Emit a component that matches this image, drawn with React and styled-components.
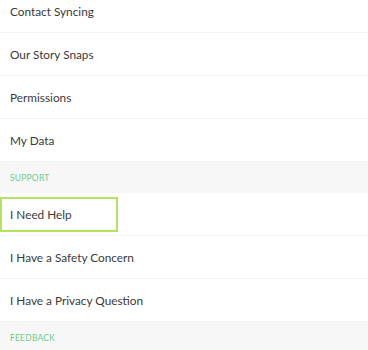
import styled, { createGlobalStyle } from "styled-components"

const GlobalStyle = createGlobalStyle`
    body {
        margin: 0;
        background: #FFFFFF;
        font-family: Lato, "Noto Sans", sans-serif;
        overflow: hidden;
    }
`

const sections = [
    { items: ["Contact Syncing", "Our Story Snaps", "Permissions", "My Data"] },
    { title: "Support", items: ["I Need Help", "I Have a Safety Concern", "I Have a Privacy Question"] },
    { title: "Feedback", items: [] },
]

export default function App(){
    return(
        <>
            <GlobalStyle />
            <List>
                {sections.map((section, i) => (
                    <div key={i}>
                        {section.title && <Header>{section.title}</Header>}
                        {section.items.map((item) => (
                            <Row key={item} focused={item === "I Need Help"}>{item}</Row>
                        ))}
                    </div>
                ))}
            </List>
        </>
    )
}

const List = styled.div`
    width: 368px;
    margin-top: -10px;
    display: flex;
    flex-direction: column;
`

const Header = styled.div`
    height: 31px;
    padding-left: 10px;
    box-sizing: border-box;

    display: flex;
    align-items: center;

    background: #F7F7F7;
    color: #6FCB8C;
    font-size: 8.5px;
    letter-spacing: 0.2px;
    text-transform: uppercase;
`

const Row = styled.div.withConfig({ shouldForwardProp: (p) => p !== "focused" })`
    position: relative;
    height: 43px;
    padding-left: 10px;
    box-sizing: border-box;

    display: flex;
    align-items: center;

    border-bottom: 1px solid #F4F4F4;
    color: #3A3A3A;
    font-size: 11.8px;

    &::after {
        content: "";
        display: ${(p) => (p.focused ? "block" : "none")};
        position: absolute;
        left: 0;
        top: 4px;
        width: 118px;
        height: 35px;
        box-sizing: border-box;
        border: 2px solid #B4E35F;
    }
`
